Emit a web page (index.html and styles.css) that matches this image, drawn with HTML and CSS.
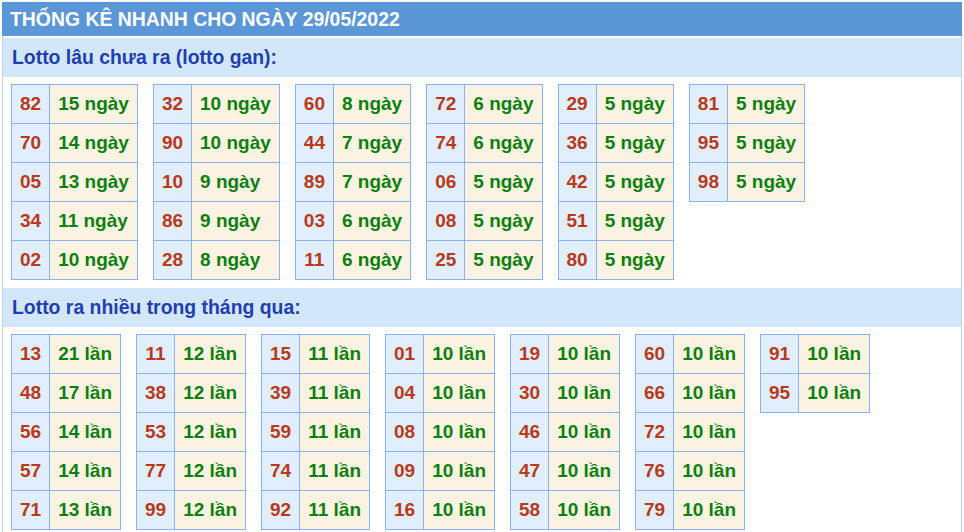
FILE: index.html
```html
<!DOCTYPE html>
<html lang="vi">
<head>
<meta charset="utf-8">
<title>Thống kê nhanh</title>
<link rel="stylesheet" href="styles.css">
</head>
<body>
<div class="page">
  <div class="head">THỐNG KÊ NHANH CHO NGÀY 29/05/2022</div>
  <div class="box">
    <div class="sec">Lotto lâu chưa ra (lotto gan):</div>
    <div class="tables">
      <table><tr><td class="n">82</td><td class="d">15 ngày</td></tr><tr><td class="n">70</td><td class="d">14 ngày</td></tr><tr><td class="n">05</td><td class="d">13 ngày</td></tr><tr><td class="n">34</td><td class="d">11 ngày</td></tr><tr><td class="n">02</td><td class="d">10 ngày</td></tr></table>
      <table><tr><td class="n">32</td><td class="d">10 ngày</td></tr><tr><td class="n">90</td><td class="d">10 ngày</td></tr><tr><td class="n">10</td><td class="d">9 ngày</td></tr><tr><td class="n">86</td><td class="d">9 ngày</td></tr><tr><td class="n">28</td><td class="d">8 ngày</td></tr></table>
      <table><tr><td class="n">60</td><td class="d">8 ngày</td></tr><tr><td class="n">44</td><td class="d">7 ngày</td></tr><tr><td class="n">89</td><td class="d">7 ngày</td></tr><tr><td class="n">03</td><td class="d">6 ngày</td></tr><tr><td class="n">11</td><td class="d">6 ngày</td></tr></table>
      <table><tr><td class="n">72</td><td class="d">6 ngày</td></tr><tr><td class="n">74</td><td class="d">6 ngày</td></tr><tr><td class="n">06</td><td class="d">5 ngày</td></tr><tr><td class="n">08</td><td class="d">5 ngày</td></tr><tr><td class="n">25</td><td class="d">5 ngày</td></tr></table>
      <table><tr><td class="n">29</td><td class="d">5 ngày</td></tr><tr><td class="n">36</td><td class="d">5 ngày</td></tr><tr><td class="n">42</td><td class="d">5 ngày</td></tr><tr><td class="n">51</td><td class="d">5 ngày</td></tr><tr><td class="n">80</td><td class="d">5 ngày</td></tr></table>
      <table><tr><td class="n">81</td><td class="d">5 ngày</td></tr><tr><td class="n">95</td><td class="d">5 ngày</td></tr><tr><td class="n">98</td><td class="d">5 ngày</td></tr></table>
    </div>
    <div class="sec">Lotto ra nhiều trong tháng qua:</div>
    <div class="tables">
      <table><tr><td class="n">13</td><td class="d">21 lần</td></tr><tr><td class="n">48</td><td class="d">17 lần</td></tr><tr><td class="n">56</td><td class="d">14 lần</td></tr><tr><td class="n">57</td><td class="d">14 lần</td></tr><tr><td class="n">71</td><td class="d">13 lần</td></tr></table>
      <table><tr><td class="n">11</td><td class="d">12 lần</td></tr><tr><td class="n">38</td><td class="d">12 lần</td></tr><tr><td class="n">53</td><td class="d">12 lần</td></tr><tr><td class="n">77</td><td class="d">12 lần</td></tr><tr><td class="n">99</td><td class="d">12 lần</td></tr></table>
      <table><tr><td class="n">15</td><td class="d">11 lần</td></tr><tr><td class="n">39</td><td class="d">11 lần</td></tr><tr><td class="n">59</td><td class="d">11 lần</td></tr><tr><td class="n">74</td><td class="d">11 lần</td></tr><tr><td class="n">92</td><td class="d">11 lần</td></tr></table>
      <table><tr><td class="n">01</td><td class="d">10 lần</td></tr><tr><td class="n">04</td><td class="d">10 lần</td></tr><tr><td class="n">08</td><td class="d">10 lần</td></tr><tr><td class="n">09</td><td class="d">10 lần</td></tr><tr><td class="n">16</td><td class="d">10 lần</td></tr></table>
      <table><tr><td class="n">19</td><td class="d">10 lần</td></tr><tr><td class="n">30</td><td class="d">10 lần</td></tr><tr><td class="n">46</td><td class="d">10 lần</td></tr><tr><td class="n">47</td><td class="d">10 lần</td></tr><tr><td class="n">58</td><td class="d">10 lần</td></tr></table>
      <table><tr><td class="n">60</td><td class="d">10 lần</td></tr><tr><td class="n">66</td><td class="d">10 lần</td></tr><tr><td class="n">72</td><td class="d">10 lần</td></tr><tr><td class="n">76</td><td class="d">10 lần</td></tr><tr><td class="n">79</td><td class="d">10 lần</td></tr></table>
      <table><tr><td class="n">91</td><td class="d">10 lần</td></tr><tr><td class="n">95</td><td class="d">10 lần</td></tr></table>
    </div>
  </div>
</div>
</body>
</html>
```

FILE: styles.css
```css
html, body {
  margin: 0;
  padding: 0;
  background: #fff;
}
body {
  font-family: "Liberation Sans", Arial, sans-serif;
}
.page {
  padding: 2px 2px 0 2px;
  width: 960px;
}
.head {
  background: #5b96d6;
  color: #fff;
  font-weight: bold;
  font-size: 19.4px;
  line-height: 22px;
  padding: 6px 8px;
}
.box {
  border-left: 1px solid #c6d3e6;
  border-right: 1px solid #c6d3e6;
  padding-top: 2px;
  width: 958px;
}
.sec {
  background: #d3e7fb;
  color: #1f3fae;
  font-weight: bold;
  font-size: 19.4px;
  line-height: 22px;
  padding: 8px 9px 9px;
}
.tables {
  display: flex;
  align-items: flex-start;
  gap: 15px;
  padding: 7px 8px 8px;
}
table {
  border-collapse: collapse;
  flex: none;
}
td {
  border: 1px solid #8fb1f1;
  padding: 8px;
  font-size: 19px;
  line-height: 22px;
  font-weight: bold;
  white-space: nowrap;
}
td.n {
  background: #e0eefd;
  color: #b8391b;
  text-align: center;
}
td.d {
  background: #fdf3e3;
  color: #0b7f0b;
  text-align: left;
}
```
